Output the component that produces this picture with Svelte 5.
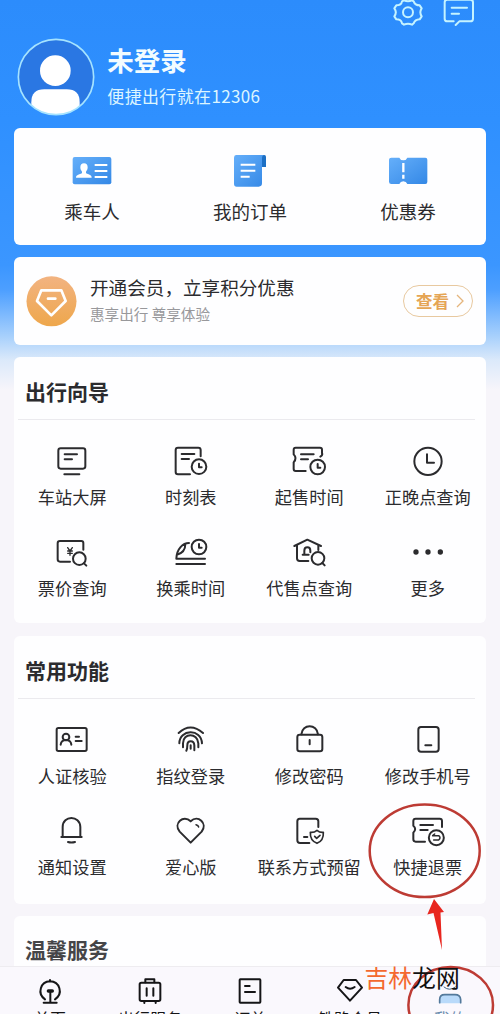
<script>
  const clock = (x, y, r) =>
    `<circle cx="${x}" cy="${y}" r="${r}"/><path d="M${x} ${y - 9}V${y + 2}H${x + 8}"/>`;

  const shortcuts = [
    {
      label: '乘车人',
      box: '212 84 126 108',
      art: `<rect x="217" y="96" width="116" height="82" rx="6" fill="url(#sky)"/><path d="M240 127c0-8 4-12 11-12s11 4 11 12c0 6-2 9-5 13v5c6 3 17 4 17 13h-47c0-9 12-10 18-13v-5c-3-4-5-7-5-13z" fill="#fff"/><path d="M283 120h38M283 138h38M283 156h38" stroke="#fff" stroke-width="6"/>`
    },
    {
      label: '我的订单',
      box: '687 84 126 108',
      art: `<path d="M783 90h10q5 0 5 5v31h-15z" fill="#1c6fc4"/><path d="M708 90h86q-8 0-8 10v75q0 10-10 10h-66q-8 0-8-9V98q0-8 6-8z" fill="url(#sky)"/><path d="M722 119h44M722 137h44M722 155h27" stroke="#fff" stroke-width="6"/>`
    },
    {
      label: '优惠券',
      box: '411 84 126 108',
      art: `<path d="M424 98h24q3 8 12 8t12-8h54q6 0 6 6v67q0 6-6 6h-54q-3-8-12-8t-12 8h-24q-7 0-7-7v-66q0-6 7-6z" fill="url(#sky)"/><path d="M460 114v28M460 149v12" stroke="#fff" stroke-width="7"/>`
    }
  ];

  const guide = [
    {
      label: '车站大屏',
      box: '103 39 108 108',
      art: `<rect x="116" y="55" width="81" height="61" rx="7"/><path d="M135 73h37M135 88h22M134 133h45"/>`
    },
    {
      label: '时刻表',
      box: '458 39 108 108',
      art: `<path d="M541 79V60q0-7-7-7h-61q-7 0-7 7v66q0 7 7 7h36M484 72h38M484 87h22"/>${clock(536, 110, 22)}`
    },
    {
      label: '起售时间',
      box: '124 39 108 108',
      art: `<path d="M212 80q8-4 5-11V59q0-6-6-6h-73q-6 0-6 6v14q11 11 0 24v20q0 6 6 6h30M154 73h38M154 88h21"/>${clock(204, 111, 22)}`
    },
    {
      label: '正晚点查询',
      box: '479 39 108 108',
      art: `<circle cx="533" cy="94" r="41"/><path d="M530 73v25h21"/>`
    },
    {
      label: '票价查询',
      box: '103 312 108 108',
      art: `<path d="M191 359v-20q0-6-6-6h-64q-7 0-7 7v48q0 7 7 7h30"/><path d="M144 353l7 10 7-10M151 363v13M144 363h14M144 370h14" stroke-width="4"/><circle cx="179" cy="386" r="19"/><path d="M193 400l7 7"/>`
    },
    {
      label: '换乘时间',
      box: '458 312 108 108',
      art: `<path d="M506 339c-18 0-37 17-38 47h86M468 402h86M495 342c0 17-9 28-25 32"/>${clock(536, 351, 22)}`
    },
    {
      label: '代售点查询',
      box: '124 312 108 108',
      art: `<path d="M134 348l39-19 41 19M142 347v38q0 8 8 8h26M206 346v14M164 372v-10q0-10 9-10t9 10v5M159 374h18"/><circle cx="205" cy="385" r="19"/><path d="M218 399l7 7"/>`
    },
    {
      label: '更多',
      box: '479 312 108 108',
      art: `<g fill="#2b2b2e" stroke="none"><circle cx="497" cy="366" r="8"/><circle cx="533" cy="366" r="8"/><circle cx="570" cy="366" r="8"/></g>`
    }
  ];

  const common = [
    {
      label: '人证核验',
      box: '103 39 108 108',
      art: `<rect x="111" y="57" width="90" height="69" rx="5"/><circle cx="139" cy="84" r="10"/><path d="M123 107c1-10 7-14 16-14s15 4 16 14M168 83h10M168 96h18"/>`
    },
    {
      label: '指纹登录',
      box: '458 39 108 108',
      art: `<path d="M475 72q35-33 73 0M477 103c0-42 66-46 68 0M488 115v-12c0-32 44-32 46 0v12M498 125q3-5 3-16c0-16 20-16 21 0v15M511 109v10"/>`
    },
    {
      label: '修改密码',
      box: '124 39 108 108',
      art: `<rect x="143" y="77" width="75" height="50" rx="7"/><path d="M155 76c3-32 47-32 50 0M180 93v13"/>`
    },
    {
      label: '修改手机号',
      box: '479 39 108 108',
      art: `<rect x="504" y="54" width="61" height="74" rx="8"/><path d="M525 109h18"/>`
    },
    {
      label: '通知设置',
      box: '103 312 108 108',
      art: `<path d="M125 384h61M129 384v-30c0-36 52-36 53 0v30M145 399q10 3 21 0"/>`
    },
    {
      label: '爱心版',
      box: '458 312 108 108',
      art: `<path d="M511 401l-33-33c-20-25 11-52 33-31 22-21 52 6 33 31z"/><path d="M527 347q7 2 8 7" stroke-width="4.500"/>`
    },
    {
      label: '联系方式预留',
      box: '124 312 108 108',
      art: `<path d="M206 354v-17q0-8-8-8h-48q-7 0-7 8v57q0 8 8 8h28M163 384h10"/><path d="M202 364q8 7 19 6c1 17-4 27-19 33-15-6-21-16-20-33q12 1 20-6zM195 382l6 6 10-9" stroke-width="5"/>`
    },
    {
      label: '快捷退票',
      box: '479 312 108 108',
      art: `<path d="M575 354v-18q0-7-7-7h-72q-7 0-7 7v14q11 9 0 21v20q0 7 7 7h28M510 348h38M510 363h22"/><circle cx="558" cy="386" r="22.500"/><path d="M553 375l-6 5h18q8 6 0 13h-15" stroke-width="4.500"/>`
    }
  ];

  const sections = [
    { title: '出行向导', items: guide },
    { title: '常用功能', items: common }
  ];

  const tabs = [
    {
      label: '首页',
      box: '96 130 108 108',
      art: `<path d="M135 209c-25-18-13-53 15-54 29 1 41 36 15 54M150 151v4M151 185v33M131 219h39"/><path d="M145 184h12" stroke-width="10"/>`
    },
    {
      label: '出行服务',
      box: '396 130 108 108',
      art: `<rect x="419" y="159" width="62" height="55" rx="5"/><path d="M436 158v-9h27v9M440 176v22M460 176v22M433 215v5M467 215v5"/>`
    },
    {
      label: '订单',
      box: '696 130 108 108',
      art: `<rect x="719" y="149" width="62" height="70" rx="2"/><path d="M735 169h14M735 187h30"/>`
    },
    {
      label: '铁路会员',
      box: '246 250 108 108',
      art: `<path d="M281 271h37l18 23-36 39-36-39zM287 292q13 10 27 0"/>`
    },
    {
      label: '我的',
      active: true,
      box: '546 250 108 108',
      art: `<path d="M582 292q16 14 34 0" stroke="#3f6382" stroke-width="3"/><path d="M569 341v-11q0-15 15-15h31q16 0 17 15v11z" fill="#b9dafa" stroke="none"/><path d="M569 339v-9q0-15 15-15h31q16 0 17 15v9" stroke="#53799b" stroke-width="5"/>`
    }
  ];
</script>

<main class="screen">
  <div class="content">
    <svg class="defs" width="0" height="0" aria-hidden="true">
      <linearGradient id="sky" x1="0" y1="0" x2="1" y2="1">
        <stop offset="0" stop-color="#65affa" />
        <stop offset="1" stop-color="#3488e6" />
      </linearGradient>
    </svg>

    <div class="actions">
      <svg viewBox="419 0 108 90">
        <path d="M461 1q12 5 24 0l5 3q4 12 18 12l6 9q-8 12 0 24l-6 9q-14 1-18 12l-5 4q-12-5-24 0l-6-4q-2-12-17-12l-6-9q9-12 0-24l6-9q15 0 17-12z" />
        <circle cx="473" cy="37" r="15" />
      </svg>
      <svg viewBox="574 0 108 90">
        <path d="M612 64h-19q-8 0-8-8V7q0-8 8-8h69q8 0 8 8v49q0 8-8 8h-33l-11 11M606 23h46M606 41h22" />
      </svg>
    </div>

    <header class="profile">
      <svg class="avatar" viewBox="52 115 234 234">
        <clipPath id="face"><circle cx="169" cy="232" r="113" /></clipPath>
        <circle cx="169" cy="232" r="113" fill="#2a77e3" />
        <g clip-path="url(#face)" fill="#fff">
          <circle cx="167" cy="213" r="46" />
          <path d="M95 350v-42q0-39 39-39h67q39 0 39 39v42z" />
        </g>
        <circle cx="169" cy="232" r="113" fill="none" stroke="#a5e3ff" stroke-width="5" />
      </svg>
      <div class="who">
        <h1>未登录</h1>
        <p>便捷出行就在12306</p>
      </div>
    </header>

    <section class="card shortcuts">
      {#each shortcuts as item}
        <div class="shortcut">
          <svg viewBox={item.box}>{@html item.art}</svg>
          <span>{item.label}</span>
        </div>
      {/each}
    </section>

    <section class="card member">
      <svg class="gem" viewBox="78 77 153 153">
        <linearGradient id="gold" x1="0" y1="0" x2="0" y2="1">
          <stop offset="0" stop-color="#f2b381" />
          <stop offset="1" stop-color="#eea74c" />
        </linearGradient>
        <circle cx="154.500" cy="153" r="75" fill="url(#gold)" />
        <path d="M124 120h60l13 32-43 43-43-43z" fill="none" stroke="#fff" stroke-width="8" stroke-linejoin="round" />
        <path d="M144 145h22" stroke="#fff" stroke-width="8" stroke-linecap="round" />
      </svg>
      <div class="pitch">
        <h2>开通会员，立享积分优惠</h2>
        <p>惠享出行 尊享体验</p>
      </div>
      <button>
        查看
        <svg viewBox="0 0 8 14"><path d="M1 1l6 6-6 6" /></svg>
      </button>
    </section>

    {#each sections as section}
      <section class="card menu">
        <h3>{section.title}</h3>
        <div class="grid">
          {#each section.items as item}
            <div class="item">
              <svg class="line" viewBox={item.box}>{@html item.art}</svg>
              <span>{item.label}</span>
            </div>
          {/each}
        </div>
      </section>
    {/each}

    <section class="card menu last">
      <h3>温馨服务</h3>
    </section>
  </div>

  <nav>
    {#each tabs as tab}
      <div class="tab" class:active={tab.active}>
        <svg class="line" viewBox={tab.box}>{@html tab.art}</svg>
        <span>{tab.label}</span>
      </div>
    {/each}
  </nav>

  <svg class="marks" viewBox="0 0 500 1014">
    <g fill="none" stroke="#bd3b34" stroke-width="2.500">
      <ellipse cx="424.700" cy="850.700" rx="55" ry="46.300" />
      <ellipse cx="450.700" cy="1005" rx="42.300" ry="38" />
    </g>
    <path d="M434 899L427.300 914.500l6.200-1.500L442 950l-1.500-37.500 3.500-.5z" fill="#e8261f" />
  </svg>
  <div class="watermark"><b>吉林</b>龙网</div>
</main>

<style>
  :global(body) {
    margin: 0;
  }
  .screen {
    position: relative;
    display: flex;
    flex-direction: column;
    width: 500px;
    height: 1014px;
    overflow: hidden;
    color: #2b2b2e;
    font-family: 'Noto Sans CJK SC', sans-serif;
    background: linear-gradient(#2c8cfc 0, #2f90ff 120px, #3b96ff 265px, #4d9fff 290px, #a9d1fc 337px, #dbe9fa 360px, #f7f5fa 390px);
  }
  h1, h2, h3, p {
    margin: 0;
  }
  .content {
    height: 966px;
    overflow: hidden;
    flex: none;
  }
  .defs {
    display: block;
  }
  .actions {
    display: flex;
    justify-content: flex-end;
    gap: 15.600px;
    height: 30px;
    padding-right: 22.700px;
  }
  .actions svg {
    width: 36px;
    height: 30px;
    fill: none;
    stroke: #c5f3ff;
    stroke-width: 6;
    stroke-linejoin: round;
    stroke-linecap: round;
  }
  .profile {
    display: flex;
    gap: 12px;
    margin-top: 8px;
    padding-left: 17.300px;
  }
  .avatar {
    width: 78px;
    height: 78px;
  }
  .who {
    display: flex;
    flex-direction: column;
    gap: 8px;
    padding-top: 6px;
    color: #f2fcff;
  }
  h1 {
    font-size: 26.500px;
    line-height: 32px;
    font-weight: 700;
  }
  .who p {
    font-size: 17px;
    letter-spacing: 0.350px;
    line-height: 24px;
    color: #dcf5ff;
  }
  .card {
    margin: 12px 14px 0;
    border-radius: 6px;
    background: #fefeff;
  }
  .shortcuts {
    box-sizing: border-box;
    display: grid;
    grid-template-columns: repeat(3, 158px);
    justify-content: center;
    height: 117px;
    padding-top: 25px;
  }
  .shortcut {
    display: flex;
    flex-direction: column;
    align-items: center;
    gap: 10px;
    font-size: 18.500px;
    line-height: 24px;
  }
  .shortcut svg {
    width: 42px;
    height: 36px;
  }
  .member {
    display: flex;
    align-items: center;
    height: 88px;
    padding: 0 13px 0 12px;
  }
  .gem {
    width: 51px;
    height: 51px;
  }
  .pitch {
    flex: 1;
    margin: -4px 0 0 13px;
  }
  h2 {
    font-size: 18.600px;
    line-height: 26px;
    font-weight: 400;
  }
  .pitch p {
    margin-top: 4px;
    font-size: 14.600px;
    line-height: 20px;
    color: #98989b;
  }
  button {
    box-sizing: border-box;
    display: flex;
    align-items: center;
    gap: 7px;
    width: 70px;
    height: 32px;
    padding: 0 0 0 12px;
    border: 1px solid #e8c9a0;
    border-radius: 16px;
    background: none;
    color: #e5a555;
    font: 700 16.500px/30px 'Noto Sans CJK SC', sans-serif;
  }
  button svg {
    width: 8px;
    height: 14px;
    fill: none;
    stroke: #e5b57c;
    stroke-width: 1.300;
  }
  .menu {
    box-sizing: border-box;
    height: 266px;
    padding-top: 19px;
  }
  .menu + .menu {
    margin-top: 13px;
    height: 268px;
  }
  h3 {
    margin: 0 11px 0 4px;
    padding: 0 0 13px 7px;
    border-bottom: 1px solid #ebeaee;
    font-size: 21px;
    line-height: 30px;
    font-weight: 700;
  }
  .menu + .last {
    margin-top: 12px;
    padding-top: 18px;
  }
  .last h3 {
    color: #454548;
  }
  .grid {
    display: grid;
    grid-template-columns: repeat(4, 118.500px);
    row-gap: 26.500px;
    margin: 23px -1px 0;
  }
  .item {
    display: flex;
    flex-direction: column;
    align-items: center;
    gap: 6.500px;
    font-size: 17.200px;
    line-height: 22px;
    white-space: nowrap;
  }
  .line {
    width: 36px;
    height: 36px;
    fill: none;
    stroke: #2b2b2e;
    stroke-width: 6;
    stroke-linecap: round;
    stroke-linejoin: round;
  }
  nav {
    display: flex;
    flex: none;
    height: 47px;
    overflow: hidden;
    border-top: 1px solid #eeecf0;
    background: #faf8fd;
  }
  .tab {
    display: flex;
    flex: 1;
    flex-direction: column;
    align-items: center;
    padding-top: 6.300px;
    font-size: 16px;
    line-height: 24px;
    color: #151517;
  }
  .tab .line {
    flex: none;
    stroke: #151517;
  }
  .tab span {
    margin-top: -3px;
  }
  .tab.active {
    color: #6d8eaf;
  }
  .marks {
    position: absolute;
    inset: 0;
    width: 500px;
    height: 1014px;
  }
  .watermark {
    position: absolute;
    left: 364.500px;
    top: 961px;
    font-size: 23.800px;
    line-height: 32px;
    color: #111;
  }
  .watermark b {
    font-weight: 400;
    color: #f4692f;
  }
</style>
